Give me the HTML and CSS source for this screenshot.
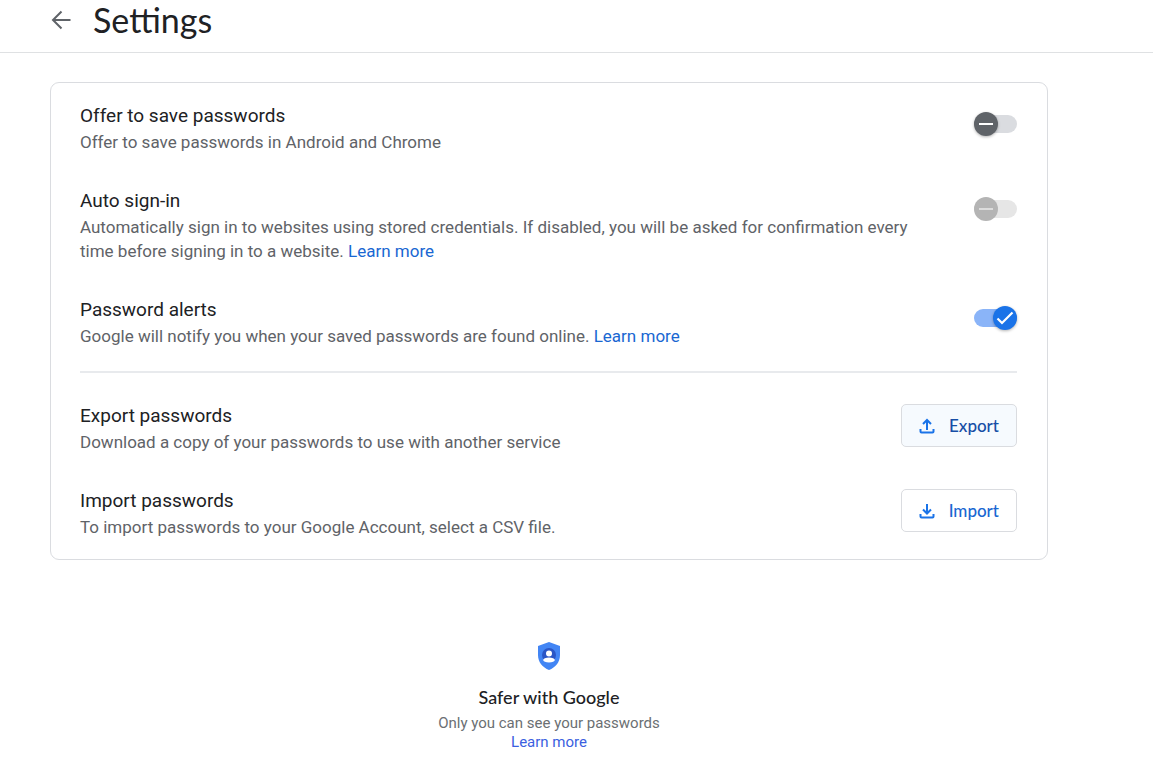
FILE: index.html
```html
<!DOCTYPE html>
<html lang="en">
<head>
<meta charset="utf-8">
<meta name="viewport" content="width=device-width, initial-scale=1">
<title>Settings</title>
<link rel="stylesheet" href="styles.css">
</head>
<body>
<header class="header">
  <button class="back" type="button" aria-label="Back">
    <svg width="20" height="20" viewBox="0 0 20 20" fill="none" stroke="#5f6368" stroke-width="2"><path d="M19.500 10H2.500M10.500 1.500L2 10l8.500 8.500"/></svg>
  </button>
  <h1 class="page-title">Settings</h1>
</header>
<main class="main">
  <section class="card">
    <div class="row">
      <div class="text">
        <h2 class="title"><label for="save">Offer to save passwords</label></h2>
        <p class="desc">Offer to save passwords in Android and Chrome</p>
      </div>
      <span class="switch">
        <input class="switch-input" type="checkbox" role="switch" id="save">
        <span class="knob"><svg width="24" height="24" viewBox="0 0 24 24"><path d="M5 12h14" stroke="#fff" stroke-width="2"/></svg></span>
      </span>
    </div>
    <div class="row">
      <div class="text">
        <h2 class="title"><label for="auto">Auto sign-in</label></h2>
        <p class="desc">Automatically sign in to websites using stored credentials. If disabled, you will be asked for confirmation every time before signing in to a website. <a class="link" href="#">Learn more</a></p>
      </div>
      <span class="switch">
        <input class="switch-input" type="checkbox" role="switch" id="auto" disabled>
        <span class="knob"><svg width="24" height="24" viewBox="0 0 24 24"><path d="M5 12h14" stroke="#dcdcdc" stroke-width="2"/></svg></span>
      </span>
    </div>
    <div class="row">
      <div class="text">
        <h2 class="title"><label for="alerts">Password alerts</label></h2>
        <p class="desc">Google will notify you when your saved passwords are found online. <a class="link" href="#">Learn more</a></p>
      </div>
      <span class="switch">
        <input class="switch-input" type="checkbox" role="switch" id="alerts" checked>
        <span class="knob"><svg width="24" height="24" viewBox="0 0 24 24"><path d="M4.500 12.500l4.500 4.500L19.500 6.500" fill="none" stroke="#fff" stroke-width="2.200"/></svg></span>
      </span>
    </div>
    <hr class="divider">
    <div class="row">
      <div class="text">
        <h2 class="title">Export passwords</h2>
        <p class="desc">Download a copy of your passwords to use with another service</p>
      </div>
      <button class="button button-active" type="button">
        <svg width="16" height="16" viewBox="0 0 16 16" fill="none" stroke="#1a73e8" stroke-width="2"><path d="M8 12V2M4 6l4-4 4 4M1.500 11v2.500q0 1 1 1h11q1 0 1-1V11"/></svg>
        <span>Export</span>
      </button>
    </div>
    <div class="row">
      <div class="text">
        <h2 class="title">Import passwords</h2>
        <p class="desc">To import passwords to your Google Account, select a CSV file.</p>
      </div>
      <button class="button" type="button">
        <svg width="16" height="16" viewBox="0 0 16 16" fill="none" stroke="#1a73e8" stroke-width="2"><path d="M8 1v9.500M4 6.500l4 4 4-4M1.500 11v2.500q0 1 1 1h11q1 0 1-1V11"/></svg>
        <span>Import</span>
      </button>
    </div>
  </section>
  <footer class="safer">
    <svg class="shield" width="24" height="28" viewBox="0 0 24 28">
      <path d="M12 0l11 4v9c0 7-4.500 12.500-11 15C5.500 25.500 1 20 1 13V4z" fill="#4285f4"/>
      <circle cx="12" cy="13" r="7" fill="#2a56c6"/>
      <circle cx="12" cy="11.500" r="3" fill="#fff"/>
      <ellipse cx="12" cy="18" rx="5.800" ry="2.400" fill="#fff"/>
    </svg>
    <h2 class="safer-title">Safer with Google</h2>
    <p class="safer-text">Only you can see your passwords</p>
    <a class="safer-link" href="#">Learn more</a>
  </footer>
</main>
</body>
</html>
```
FILE: styles.css
```css
* {
  box-sizing: border-box;
}

body {
  margin: 0;
  background: #fff;
  color: #202124;
  font-family: Roboto, sans-serif;
}

h1, h2, p {
  margin: 0;
  font-weight: 400;
}

a {
  text-decoration: none;
}

.header {
  display: flex;
  align-items: center;
  gap: 22px;
  padding: 0 51px 12px;
  border-bottom: 1px solid #dfe1e3;
}

.back {
  display: flex;
  padding: 0;
  border: 0;
  background: none;
}

.page-title {
  font-family: Lato, sans-serif;
  font-size: 34px;
  line-height: 40px;
}

.main {
  padding: 29px 105px 0 50px;
}

.card {
  display: flex;
  flex-direction: column;
  gap: 33px;
  padding: 19px 30px 20px 29px;
  border: 1px solid #dadce0;
  border-radius: 9px;
}

.row {
  display: flex;
  justify-content: space-between;
  align-items: flex-start;
  gap: 56px;
}

.title {
  font-size: 19px;
  line-height: 28px;
}

.desc {
  color: #5f6368;
  font-size: 17px;
  line-height: 24px;
}

.link {
  color: #1967d2;
}

.switch {
  position: relative;
  flex: none;
  width: 43px;
  height: 24px;
  margin-top: 10px;
}

.switch-input {
  display: block;
  width: 43px;
  height: 18px;
  margin: 3px 0;
  border-radius: 9px;
  background: #dadce0;
  appearance: none;
}

.knob {
  position: absolute;
  top: 0;
  left: 0;
  width: 24px;
  height: 24px;
  border-radius: 50%;
  background: #5f6368;
  box-shadow: 0 1px 3px rgba(0, 0, 0, 0.3);
  pointer-events: none;
}

.knob svg {
  display: block;
}

.switch-input:disabled {
  background: #e6e6e6;
}

.switch-input:disabled + .knob {
  background: #b4b4b4;
  box-shadow: none;
}

.switch-input:checked {
  background: #8ab4f8;
}

.switch-input:checked + .knob {
  left: auto;
  right: 0;
  background: #1a73e8;
}

.divider {
  width: 100%;
  height: 2px;
  margin: -10px 0 -4px;
  border: 0;
  background: #e8eaed;
}

.button {
  display: flex;
  flex: none;
  align-items: center;
  gap: 14px;
  height: 43px;
  margin-top: 2px;
  padding: 0 17px;
  border: 1px solid #dadce0;
  border-radius: 5px;
  background: #fff;
  color: #1967d2;
  font: 500 17px/24px Lato, sans-serif;
}

.button-active {
  background: #f6fafe;
  color: #174ea6;
}

.safer {
  display: flex;
  flex-direction: column;
  align-items: center;
  padding: 82px 0 10px;
}

.safer-title {
  margin: 15px 0 5px;
  font: 500 18px/24px Lato, sans-serif;
}

.safer-text,
.safer-link {
  font-size: 15px;
  line-height: 19px;
}

.safer-text {
  color: #6b6f73;
}

.safer-link {
  color: #3b5fe0;
}
```
